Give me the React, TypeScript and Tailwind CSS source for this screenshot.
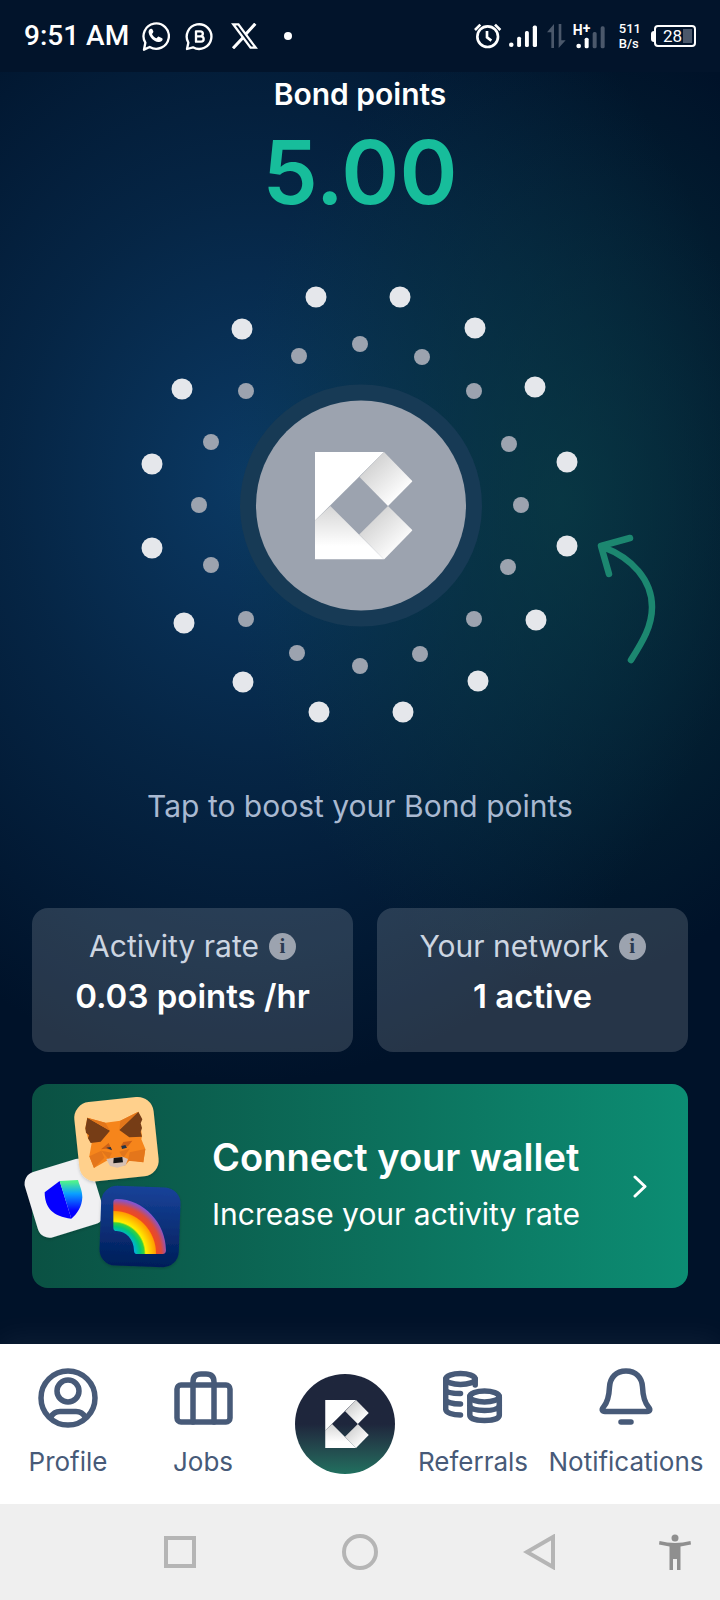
import { useId, type ReactNode } from "react";

const OUTER_DOTS: [number, number][] = [
  [316, 297], [400, 297], [475, 328], [535, 387], [567, 462], [567, 546], [536, 620], [478, 681],
  [403, 712], [319, 712], [243, 682], [184, 623], [152, 548], [152, 464], [182, 389], [242, 329],
];

const INNER_DOTS: [number, number][] = [
  [360, 344], [422, 357], [474, 391], [509, 444], [521, 505], [508, 567], [474, 619], [420, 654],
  [360, 666], [297, 653], [246, 619], [211, 565], [199, 505], [211, 442], [246, 391], [299, 356],
];

function BrandMark({ x = 0, y = 0, width, height }: { x?: number; y?: number; width: number; height: number }) {
  const id = useId();
  return (
    <svg x={x} y={y} width={width} height={height} viewBox="0 0 97.5 107.5" aria-hidden="true">
      <defs>
        <linearGradient id={`${id}a`} x1="0.25" y1="0.2" x2="0.8" y2="0.8">
          <stop offset="0" stopColor="#d4d4d4" />
          <stop offset="1" stopColor="#ffffff" />
        </linearGradient>
        <linearGradient id={`${id}b`} x1="0" y1="0" x2="0" y2="1">
          <stop offset="0" stopColor="#d6d6d6" />
          <stop offset="0.75" stopColor="#ffffff" />
        </linearGradient>
      </defs>
      <path d="M0 0H69L0 68.5Z" fill="#ffffff" />
      <path d="M69 0L97.5 29.3L73 54L44.5 25Z" fill={`url(#${id}a)`} />
      <path d="M73 54L97.5 78.3L69 107.5L44.2 82.5Z" fill={`url(#${id}a)`} />
      <path d="M15.3 54L69 107.5H0V68.5Z" fill={`url(#${id}b)`} />
    </svg>
  );
}

function StatusBar() {
  return (
    <header className="flex h-18 items-center justify-between bg-[#02142b] px-6 font-[Roboto,sans-serif] text-white">
      <div className="flex items-center">
        <span className="text-[28px] leading-9 font-medium">9:51 AM</span>
        <svg className="ml-3 h-[31px] w-[29px]" viewBox="424 62 87 93" fill="none" aria-label="WhatsApp">
          <path d="M433 148L437 127A38 38 0 1 1 450 140Z" stroke="#fff" strokeWidth="7" strokeLinejoin="round" />
          <path d="M452 86c-4 2-6 6-5 11 3 14 15 26 29 28 6 1 12-2 13-8 0-2-1-3-3-4l-8-4c-2-1-3 0-4 1l-3 4c-6-2-11-7-14-13l3-4c1-1 1-2 1-4l-3-6c-1-2-3-2-6-1Z" fill="#fff" />
        </svg>
        <svg className="ml-[15px] h-[29px] w-[29px]" viewBox="556 64 87 87" fill="none" aria-label="WhatsApp Business">
          <path d="M562 145L566 126A37 37 0 1 1 580 140Z" stroke="#fff" strokeWidth="7" strokeLinejoin="round" />
          <path d="M589 92H602A7.500 7.500 0 0 1 602 107H589ZM589 107H604A8 8 0 0 1 604 123H589Z" stroke="#fff" strokeWidth="7" strokeLinejoin="round" />
        </svg>
        <svg className="ml-[17px] h-[26px] w-[27px]" viewBox="692 70 80 77" fill="none" aria-label="X">
          <path d="M699 74H714L765 143H750Z" stroke="#fff" strokeWidth="7" />
          <path d="M764 72L735 104M728 113L698 145" stroke="#fff" strokeWidth="9" />
        </svg>
        <span className="ml-[26px] size-2 rounded-full bg-white" />
      </div>
      <div className="flex items-center">
        <svg className="h-[26px] w-[28px]" viewBox="343 70 84 78" fill="none" stroke="#fff" strokeWidth="8" aria-label="Alarm">
          <circle cx="384" cy="111" r="31" />
          <path d="M346 91L362 75M422 91L406 75M382 94V113L395 123" />
        </svg>
        <svg className="ml-[7px] h-[24px] w-[28px]" viewBox="446 74 86 72" aria-label="Mobile signal">
          <g fill="#fff">
            <circle cx="453" cy="137" r="7" />
            <rect x="471" y="112" width="12" height="32" rx="5" />
            <rect x="495" y="95" width="12" height="49" rx="5" />
            <rect x="519" y="78" width="13" height="66" rx="5" />
          </g>
        </svg>
        <svg className="ml-[10px] h-[26px] w-[19px]" viewBox="563 72 57 78" fill="#4b586b" aria-hidden="true">
          <path d="M576 147V100H563L584 75V147ZM598 75H606V124H619L598 147Z" />
        </svg>
        <div className="relative ml-[7px] h-[26px] w-[32px]">
          <svg className="size-full" viewBox="640 68 96 78" aria-label="Second mobile signal">
            <circle cx="657" cy="137" r="7" fill="#fff" />
            <rect x="675" y="112" width="12" height="32" rx="5" fill="#fff" />
            <rect x="699" y="95" width="12" height="49" rx="5" fill="#4b586b" />
            <rect x="723" y="78" width="12" height="66" rx="5" fill="#4b586b" />
          </svg>
          <span className="absolute top-0 left-0 text-[14px] leading-[10px] font-bold">H<span className="align-[2px]">+</span></span>
        </div>
        <div className="ml-[14px] text-[13px] leading-[15px] font-medium">
          <div>511</div>
          <div>B/s</div>
        </div>
        <div className="ml-[10px] flex items-center">
          <span className="h-[11px] w-[3px] rounded-l-sm bg-white" />
          <div className="flex h-[22px] w-[42px] items-center justify-end gap-px rounded-[4px] border-2 border-white pr-[2px]">
            <span className="text-[17px] leading-[18px]">28</span>
            <span className="h-[14px] w-[9px] bg-[#4b586b]" />
          </div>
        </div>
      </div>
    </header>
  );
}

function BoostOrb() {
  return (
    <div className="relative mx-auto mt-[52px] w-[460px]">
      <button type="button" aria-label="Boost Bond points" className="block w-full cursor-pointer">
        <svg className="block w-full" viewBox="130 276 460 460" aria-hidden="true">
          {OUTER_DOTS.map(([cx, cy]) => (
            <circle key={`${cx}-${cy}`} cx={cx} cy={cy} r="10.5" fill="#e5e7eb" />
          ))}
          {INNER_DOTS.map(([cx, cy]) => (
            <circle key={`${cx}-${cy}`} cx={cx} cy={cy} r="8" fill="#9ca3af" />
          ))}
          <circle cx="361" cy="505.500" r="121" fill="#173a55" />
          <circle cx="361" cy="505.500" r="105" fill="#9ca3af" />
          <BrandMark x={315} y={452} width={97.5} height={107.5} />
        </svg>
      </button>
      <svg className="absolute top-[256px] left-[464px] h-[136px] w-[66px]" viewBox="594 532 66 136" fill="none" stroke="#1c8770" strokeWidth="6.500" strokeLinecap="round" strokeLinejoin="round" aria-hidden="true">
        <path d="M630 538L601 546L609 574M603 547C632 558 652 580 652 607C652 626 643 641 631 660" />
      </svg>
    </div>
  );
}

function StatCard({ label, value }: { label: string; value: string }) {
  return (
    <section className="flex flex-col items-center rounded-2xl bg-white/15 pt-5 pb-9">
      <div className="flex items-center gap-[10px]">
        <h2 className="text-[30px] leading-9 text-[#ccd5e1]">{label}</h2>
        <button type="button" aria-label={`About ${label}`} className="flex size-[27px] items-center justify-center rounded-full bg-[#9ca3af] font-['Liberation_Serif',serif] text-[21px] leading-6 font-bold text-[#2b3a50]">
          i
        </button>
      </div>
      <p className="mt-3 text-[33px] leading-10 font-semibold text-white">{value}</p>
    </section>
  );
}

function WalletLogos() {
  return (
    <svg className="absolute top-[10px] -left-2 h-[176px] w-[158px]" viewBox="72 72 474 528" aria-hidden="true">
      <defs>
        <linearGradient id="shield" x1="0" y1="0" x2="0" y2="1">
          <stop offset="0.05" stopColor="#4df08f" />
          <stop offset="0.35" stopColor="#0aa0ff" />
          <stop offset="0.8" stopColor="#0500ff" />
        </linearGradient>
        <linearGradient id="night" x1="0" y1="0" x2="0" y2="1">
          <stop offset="0" stopColor="#174299" />
          <stop offset="1" stopColor="#001e59" />
        </linearGradient>
        <radialGradient id="bow" gradientUnits="userSpaceOnUse" cx="340" cy="551" r="162">
          <stop offset="0.39" stopColor="#01afe0" />
          <stop offset="0.5" stopColor="#00c67a" />
          <stop offset="0.57" stopColor="#3ad13a" />
          <stop offset="0.6" stopColor="#fff000" />
          <stop offset="0.78" stopColor="#ff9e00" />
          <stop offset="0.8" stopColor="#ef4a1f" />
          <stop offset="0.89" stopColor="#dd4a3a" />
          <stop offset="1" stopColor="#8754c9" />
        </radialGradient>
        <filter id="lift" x="-20%" y="-20%" width="140%" height="140%">
          <feDropShadow dx="0" dy="4" stdDeviation="5" floodOpacity="0.18" />
        </filter>
      </defs>
      <g filter="url(#lift)">
        <rect x="90" y="282" width="206" height="204" rx="36" transform="rotate(-17 194 384)" fill="#f0f0f2" />
      </g>
      <path d="M179 333L134 367C134 412 158 441 214 446Z" fill="#0500ff" />
      <path d="M179 333L234 330C240 350 247 362 247 382C246 411 231 432 214 446Z" fill="url(#shield)" />
      <g filter="url(#lift)">
        <rect x="230" y="88" width="239" height="239" rx="48" transform="rotate(-6 350 208)" fill="#ffd08c" />
      </g>
      <g>
        <path d="M262 143L316 158L361 152L415 125L426 198L424 208L436 237L430 277L390 270L376 286L344 290L324 270L282 294L268 259L275 219L264 205L256 175Z" fill="#f6851b" />
        <path d="M262 143L330 182L302 215L272 219L264 205L267 196L258 188L256 175Z" fill="#763d16" />
        <path d="M415 125L358 180L388 202L426 200L422 186L426 174L422 160L427 148Z" fill="#763d16" />
        <path d="M262 143L316 158L330 182ZM415 125L361 152L358 180Z" fill="#e2761b" />
        <path d="M303 238L326 219L336 240L317 236ZM361 232L370 216L397 212L384 229Z" fill="#cd6116" />
        <path d="M268 259L304 242L313 263L282 294ZM436 237L389 247L384 272L430 277Z" fill="#e4761b" />
        <path d="M304 242L336 248L326 268ZM389 236L358 245L370 264Z" fill="#e2761b" />
        <path d="M319 233L332 231L336 241ZM364 228L376 225L381 233L366 237Z" fill="#233447" />
        <path d="M319 267L342 263L368 260L384 267L377 286L352 293L330 288Z" fill="#d7c1b3" />
        <path d="M341 264L367 261L369 277L340 280Z" fill="#161616" />
      </g>
      <g filter="url(#lift)">
        <rect x="301" y="350" width="238" height="239" rx="48" transform="rotate(2 420 469)" fill="url(#night)" />
      </g>
      <path d="M340 397Q340 387 350 387C432 387 498 461 498 541Q498 552 488 552H412Q402 552 402 542C402 508 377 483 350 483Q340 483 340 473Z" fill="url(#bow)" />
    </svg>
  );
}

function WalletCard() {
  return (
    <a href="#wallet" className="relative mx-8 mt-8 flex items-center rounded-2xl bg-linear-to-r from-[#0a5143] to-[#0c8d73] pr-9 pl-[180px] text-white">
      <WalletLogos />
      <div className="flex-1 pt-12 pb-14">
        <h2 className="text-[38px] leading-[50px] font-semibold whitespace-nowrap">Connect your wallet</h2>
        <p className="mt-3.5 text-[30px] leading-9 whitespace-nowrap">Increase your activity rate</p>
      </div>
      <svg className="h-6 w-6" viewBox="0 0 24 24" fill="none" stroke="currentColor" strokeWidth="3" strokeLinecap="round" strokeLinejoin="round" aria-hidden="true">
        <path d="M7 3L17 12.500L7 22" />
      </svg>
    </a>
  );
}

function NavItem({ label, href, children }: { label: string; href: string; children: ReactNode }) {
  return (
    <a href={href} className="flex flex-col items-center">
      <svg className="size-[60px]" viewBox="0 0 60 60" fill="none" stroke="currentColor" strokeWidth="5.500" strokeLinecap="round" strokeLinejoin="round" aria-hidden="true">
        {children}
      </svg>
      <span className="mt-[18px] text-[26px] leading-8">{label}</span>
    </a>
  );
}

function BottomNav() {
  return (
    <nav className="relative grid grid-cols-[116fr_154fr_130fr_126fr_180fr] bg-white pt-6 pr-1 pb-[26px] pl-[10px] text-[#475a78] shadow-[0_-4px_30px_rgba(255,255,255,0.06)]">
      <NavItem label="Profile" href="#profile">
        <circle cx="30" cy="30" r="27" />
        <circle cx="30" cy="23" r="11" />
        <path d="M13 49C15 45 18 43.500 22 43.500H38C42 43.500 45 45 47 49" />
      </NavItem>
      <NavItem label="Jobs" href="#jobs">
        <rect x="4" y="17" width="53" height="37" rx="4" />
        <path d="M20 54V14Q20 6 28 6H33Q41 6 41 14V54" />
      </NavItem>
      <a href="#home" aria-label="Home" className="mt-[6px] flex size-[100px] items-center justify-center justify-self-center rounded-full bg-linear-to-b from-[#1e263c] from-50% to-[#20705f] pl-[3px]">
        <BrandMark width={44} height={48} />
      </a>
      <NavItem label="Referrals" href="#referrals">
        <ellipse cx="17.500" cy="11" rx="14.700" ry="5.500" />
        <path d="M2.700 11V41C2.700 45 10 47 17.500 47M2.700 22C4 24.500 10 25.500 17.500 25.500M2.700 32C4 34.500 10 36 17.500 36M32.200 11V17" />
        <ellipse cx="41.500" cy="28.500" rx="14.700" ry="5.500" />
        <path d="M26.800 28.500V47C26.800 50.500 33 52.500 41.500 52.500S56.300 50.500 56.300 47V28.500M26.800 38C28 41 33 42.500 41.500 42.500S55 41 56.300 38" />
      </NavItem>
      <NavItem label="Notifications" href="#notifications">
        <path d="M30 3C20 3 14 9.500 13.500 19C13 30 11 35 7.500 39C5 42 6.500 43.500 9 43.500H51C53.500 43.500 55 42 52.500 39C49 35 47 30 46.500 19C46 9.500 40 3 30 3Z" />
        <path d="M25 54H35" />
      </NavItem>
    </nav>
  );
}

function SystemNav() {
  return (
    <footer className="grid h-24 grid-cols-[1fr_2fr_2fr_2fr_1fr] items-center justify-items-center bg-[#efefef] text-[#b5b5b5]">
      <button type="button" aria-label="Recent apps" className="col-start-2 size-8 border-4 border-current" />
      <button type="button" aria-label="Home screen" className="size-9 rounded-full border-4 border-current" />
      <button type="button" aria-label="Back" className="flex">
        <svg className="size-9" viewBox="0 0 36 36" fill="none" stroke="currentColor" strokeWidth="4" aria-hidden="true">
          <path d="M31 3V33L5 18Z" />
        </svg>
      </button>
      <button type="button" aria-label="Accessibility" className="flex text-[#8f8f8f]">
        <svg className="size-9" viewBox="0 0 36 36" fill="currentColor" aria-hidden="true">
          <circle cx="18" cy="4" r="3.500" />
          <path d="M2.500 7C13 9.500 23 9.500 33.500 7L34 10.500L23.500 12.500V36H20V25H16V36H12.500V12.500L2 10.500Z" />
        </svg>
      </button>
    </footer>
  );
}

export default function App() {
  return (
    <div className="flex min-h-screen flex-col bg-[#001229] font-[Inter,sans-serif]">
      <StatusBar />
      <main className="flex-1 overflow-hidden bg-[radial-gradient(ellipse_340px_480px_at_78%_430px,#0a4046b0,#0a404600),radial-gradient(ellipse_500px_600px_at_35%_410px,#0b3a65,#0b386080_48%,#0b386000)] pt-1 pb-14">
        <h1 className="text-center text-[30px] leading-9 font-semibold text-white">Bond points</h1>
        <p className="mt-2 text-center text-[88px] leading-[104px] font-semibold text-[#17bd9b]">5.00</p>
        <BoostOrb />
        <p className="mt-[52px] text-center text-[30px] leading-9 text-[#a9b9d1]">Tap to boost your Bond points</p>
        <div className="mx-8 mt-[84px] grid grid-cols-[321fr_311fr] gap-6">
          <StatCard label="Activity rate" value="0.03 points /hr" />
          <StatCard label="Your network" value="1 active" />
        </div>
        <WalletCard />
      </main>
      <BottomNav />
      <SystemNav />
    </div>
  );
}
